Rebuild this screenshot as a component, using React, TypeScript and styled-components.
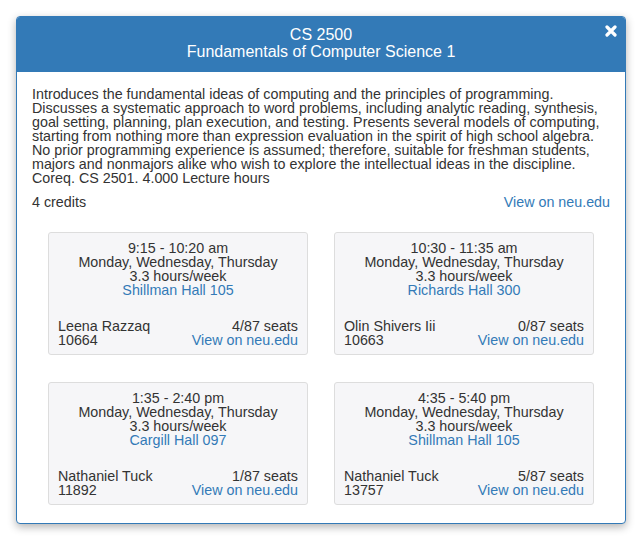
import React from "react";
import styled, { createGlobalStyle } from "styled-components";

const GlobalStyle = createGlobalStyle`
  html, body { margin: 0; padding: 0; background: #ffffff; }
  body { font-family: "Liberation Sans", Arial, sans-serif; color: #333333; }
  * { box-sizing: border-box; }
`;

const Page = styled.div`
  width: 642px;
  height: 543px;
  padding: 16px 16px 0 16px;
`;

const Modal = styled.div`
  width: 610px;
  height: 508px;
  border: 1px solid #337ab7;
  border-radius: 4px;
  background: #ffffff;
  box-shadow: 0 3px 9px rgba(0, 0, 0, 0.3);
  overflow: hidden;
  display: flex;
  flex-direction: column;
`;

const Header = styled.div`
  position: relative;
  background: #337ab7;
  color: #ffffff;
  text-align: center;
  font-size: 16px;
  line-height: 17px;
  padding: 9px 30px 11px 30px;
  height: 55px;
`;

const Close = styled.button`
  position: absolute;
  top: 8px;
  right: 8px;
  width: 12px;
  height: 12px;
  padding: 0;
  border: none;
  background: transparent;
  cursor: pointer;
  display: flex;
`;

const Body = styled.div`
  padding: 15px 15px 0 15px;
  font-size: 14.3px;
  line-height: 14px;
`;

const Description = styled.div`
  white-space: nowrap;
`;

const InfoRow = styled.div`
  display: flex;
  justify-content: space-between;
  margin-top: 10px;
`;

const Link = styled.a`
  color: #337ab7;
  text-decoration: none;
`;

const Grid = styled.div`
  display: grid;
  grid-template-columns: 260px 260px;
  column-gap: 26px;
  row-gap: 27px;
  justify-content: center;
  margin-top: 23px;
`;

const Card = styled.div`
  background: #f6f6f8;
  border: 1px solid #dddddd;
  border-radius: 3px;
  padding: 8px 9px 8px 9px;
  height: 123px;
  display: flex;
  flex-direction: column;
`;

const CardTop = styled.div`
  text-align: center;
`;

const CardFooter = styled.div`
  display: flex;
  justify-content: space-between;
  margin-top: 22px;
`;

const Col = styled.div<{ $right?: boolean }>`
  display: flex;
  flex-direction: column;
  text-align: ${(p) => (p.$right ? "right" : "left")};
`;

type Section = {
  time: string;
  location: string;
  prof: string;
  crn: string;
  seats: string;
};

const sections: Section[] = [
  { time: "9:15 - 10:20 am", location: "Shillman Hall 105", prof: "Leena Razzaq", crn: "10664", seats: "4/87 seats" },
  { time: "10:30 - 11:35 am", location: "Richards Hall 300", prof: "Olin Shivers Iii", crn: "10663", seats: "0/87 seats" },
  { time: "1:35 - 2:40 pm", location: "Cargill Hall 097", prof: "Nathaniel Tuck", crn: "11892", seats: "1/87 seats" },
  { time: "4:35 - 5:40 pm", location: "Shillman Hall 105", prof: "Nathaniel Tuck", crn: "13757", seats: "5/87 seats" },
];

const descriptionLines = [
  "Introduces the fundamental ideas of computing and the principles of programming.",
  "Discusses a systematic approach to word problems, including analytic reading, synthesis,",
  "goal setting, planning, plan execution, and testing. Presents several models of computing,",
  "starting from nothing more than expression evaluation in the spirit of high school algebra.",
  "No prior programming experience is assumed; therefore, suitable for freshman students,",
  "majors and nonmajors alike who wish to explore the intellectual ideas in the discipline.",
  "Coreq. CS 2501. 4.000 Lecture hours",
];

export default function App() {
  return (
    <Page>
      <GlobalStyle />
      <Modal>
        <Header>
          <div>CS 2500</div>
          <div>Fundamentals of Computer Science 1</div>
          <Close aria-label="Close">
            <svg width="12" height="12" viewBox="0 0 12 12">
              <path d="M2 2 L10 10 M10 2 L2 10" stroke="#ffffff" strokeWidth="3.2" strokeLinecap="round" />
            </svg>
          </Close>
        </Header>
        <Body>
          <Description>
            {descriptionLines.map((line, i) => (
              <div key={i}>{line}</div>
            ))}
          </Description>
          <InfoRow>
            <span>4 credits</span>
            <Link href="#">View on neu.edu</Link>
          </InfoRow>
          <Grid>
            {sections.map((s) => (
              <Card key={s.crn}>
                <CardTop>
                  <div>{s.time}</div>
                  <div>Monday, Wednesday, Thursday</div>
                  <div>3.3 hours/week</div>
                  <Link href="#">{s.location}</Link>
                </CardTop>
                <CardFooter>
                  <Col>
                    <span>{s.prof}</span>
                    <span>{s.crn}</span>
                  </Col>
                  <Col $right>
                    <span>{s.seats}</span>
                    <Link href="#">View on neu.edu</Link>
                  </Col>
                </CardFooter>
              </Card>
            ))}
          </Grid>
        </Body>
      </Modal>
    </Page>
  );
}
